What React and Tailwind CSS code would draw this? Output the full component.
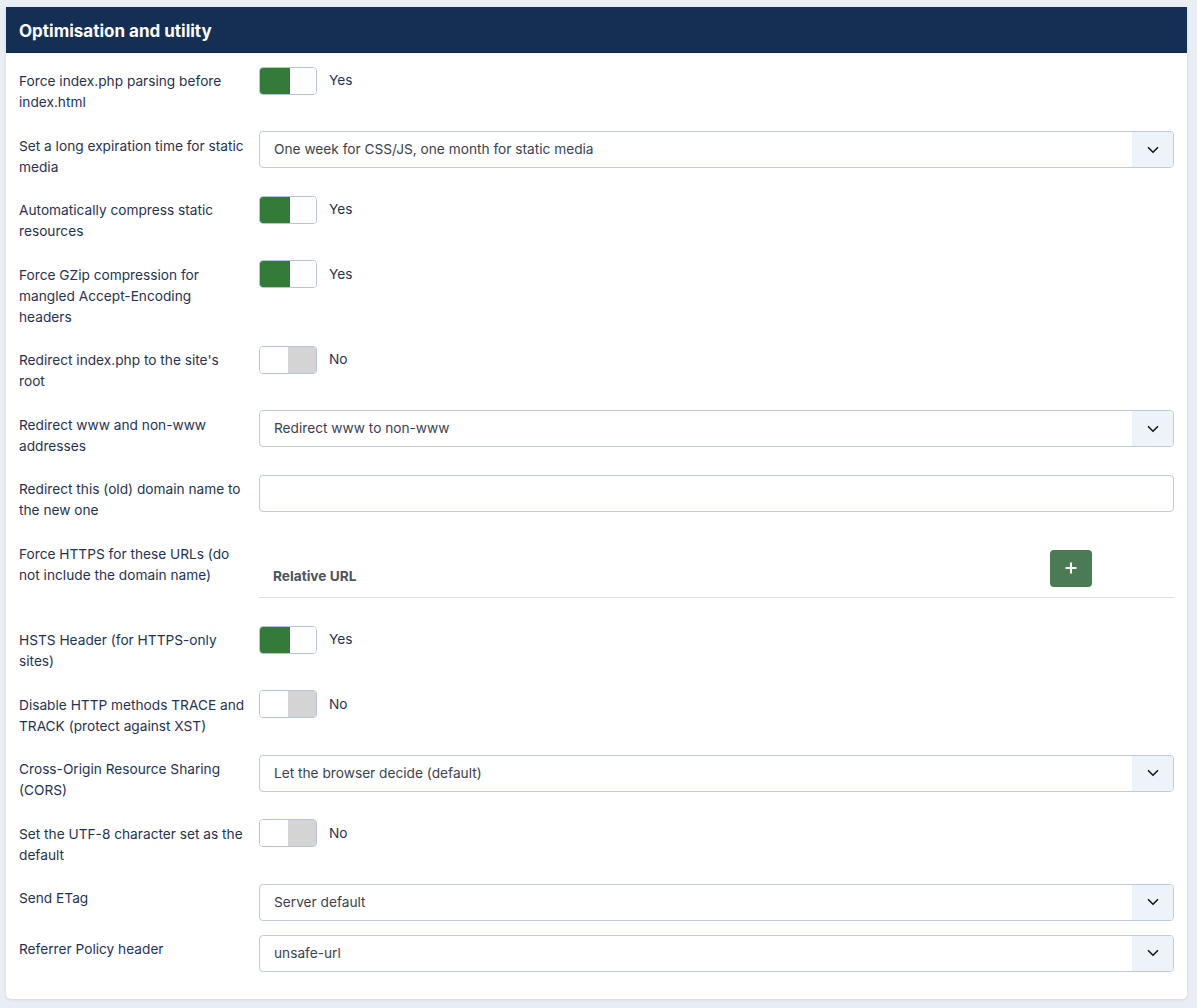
import { ChevronDown, Plus } from "lucide-react";

const rows = [
  { label: "Force index.php parsing before index.html", type: "toggle", on: true },
  { label: "Set a long expiration time for static media", type: "select", value: "One week for CSS/JS, one month for static media" },
  { label: "Automatically compress static resources", type: "toggle", on: true },
  { label: "Force GZip compression for mangled Accept-Encoding headers", type: "toggle", on: true },
  { label: "Redirect index.php to the site's root", type: "toggle", on: false },
  { label: "Redirect www and non-www addresses", type: "select", value: "Redirect www to non-www" },
  { label: "Redirect this (old) domain name to the new one", type: "input" },
  { label: "Force HTTPS for these URLs (do not include the domain name)", type: "table" },
  { label: "HSTS Header (for HTTPS-only sites)", type: "toggle", on: true },
  { label: "Disable HTTP methods TRACE and TRACK (protect against XST)", type: "toggle", on: false },
  { label: "Cross-Origin Resource Sharing (CORS)", type: "select", value: "Let the browser decide (default)" },
  { label: "Set the UTF-8 character set as the default", type: "toggle", on: false },
  { label: "Send ETag", type: "select", value: "Server default" },
  { label: "Referrer Policy header", type: "select", value: "unsafe-url" },
];

function Toggle({ on }) {
  return (
    <div className="flex items-center">
      <div className="flex h-[28px] w-[58px] overflow-hidden rounded-[4px] border border-[#b3c5de] bg-white">
        <div className={on ? "w-[30px] bg-[#347a38]" : "w-[28px] bg-white"} />
        <div className={on ? "flex-1 bg-white" : "flex-1 bg-[#d4d4d4]"} />
      </div>
      <span className="ml-[12px] text-[13.7px] text-[#1f3354]">{on ? "Yes" : "No"}</span>
    </div>
  );
}

function Select({ value }) {
  return (
    <div className="flex h-[37px] overflow-hidden rounded-[4px] border border-[#bccbe0] bg-white">
      <div className="flex flex-1 items-center pl-[14px] text-[13.7px] text-[#3b4250]">{value}</div>
      <div className="flex w-[41px] items-center justify-center bg-[#eef3fa]">
        <ChevronDown size={18} strokeWidth={2.2} className="text-[#1a1a1a]" />
      </div>
    </div>
  );
}

function Control({ row }) {
  if (row.type === "toggle") return <Toggle on={row.on} />;
  if (row.type === "select") return <Select value={row.value} />;
  if (row.type === "input") return <div className="h-[37px] rounded-[4px] border border-[#bccbe0] bg-white" />;
  return (
    <div className="mb-[14px] flex items-end border-b border-[#dfdfe6] pb-[10px] pt-[10.5px]">
      <div className="flex-1 pl-[14px] text-[13.7px] font-bold leading-[21px] text-[#4e545c]">Relative URL</div>
      <div className="flex w-[206px] justify-center">
        <button className="flex h-[37px] w-[42px] items-center justify-center rounded-[4px] bg-[#4a7b55] text-white">
          <Plus size={16} strokeWidth={3} />
        </button>
      </div>
    </div>
  );
}

export default function App() {
  return (
    <div
      className="min-h-screen bg-[#e9eef4] pl-[6px] pr-[10px] pt-[7px] pb-[10px]"
      style={{ fontFamily: "Inter, 'Noto Sans', sans-serif" }}
    >
      <div className="overflow-hidden rounded-b-[5px] bg-white shadow-[0_1px_3px_rgba(30,50,90,0.12)]">
        <div className="flex h-[46px] items-center bg-[#152f54] px-[13px] pt-[3px] text-[17px] font-bold text-white">
          Optimisation and utility
        </div>
        <div className="px-[13px] pb-[13px] pt-[13.5px]">
          {rows.map((row, i) => (
            <div key={i} className="mb-[14px] flex">
              <div className="w-[240px] shrink-0 pr-[14px] pt-[4.5px] pb-[4px] text-[13.7px] leading-[21px] text-[#1f3354]">
                {row.label}
              </div>
              <div className="flex-1">
                <Control row={row} />
              </div>
            </div>
          ))}
        </div>
      </div>
    </div>
  );
}
